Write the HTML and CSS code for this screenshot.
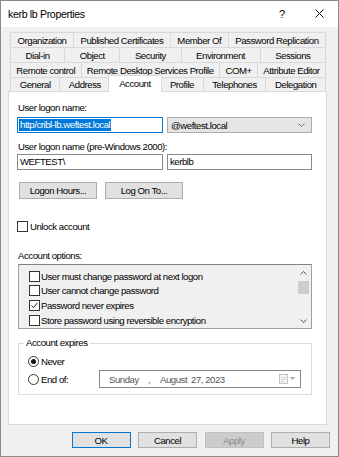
FILE: index.html
```html
<!DOCTYPE html>
<html>
<head>
<meta charset="utf-8">
<link rel="stylesheet" href="styles.css">
</head>
<body>
<div class="window">
  <div class="titlebar">
    <span class="title">kerb lb Properties</span>
    <span class="help">?</span>
    <span class="close"><svg width="9" height="9" viewBox="0 0 9 9"><path d="M0.5 0.5L8.5 8.5M8.5 0.5L0.5 8.5" stroke="#111" stroke-width="1" fill="none"/></svg></span>
  </div>
  <div class="main">
    <div class="tabs">
      <div class="tabrow h15">
        <div class="tab">Organization</div>
        <div class="tab">Published Certificates</div>
        <div class="tab">Member Of</div>
        <div class="tab last">Password Replication</div>
      </div>
      <div class="tabrow h15">
        <div class="tab">Dial-in</div>
        <div class="tab">Object</div>
        <div class="tab">Security</div>
        <div class="tab">Environment</div>
        <div class="tab last">Sessions</div>
      </div>
      <div class="tabrow h15">
        <div class="tab">Remote control</div>
        <div class="tab">Remote Desktop Services Profile</div>
        <div class="tab">COM+</div>
        <div class="tab last">Attribute Editor</div>
      </div>
      <div class="tabrow h14">
        <div class="tab">General</div>
        <div class="tab">Address</div>
        <div class="tab sel">Account</div>
        <div class="tab">Profile</div>
        <div class="tab">Telephones</div>
        <div class="tab last">Delegation</div>
      </div>
    </div>

    <div class="panel">
      <div class="label l1">User logon name:</div>
      <div class="fieldrow r1">
        <div class="input focus"><span class="selected">http/cribl-lb.weftest.local</span></div>
        <div class="combo">
          <span class="combo-text">@weftest.local</span>
          <svg class="chev" width="7" height="4" viewBox="0 0 7 4"><path d="M0.5 0.5L3.5 3.5L6.5 0.5" stroke="#707070" fill="none" stroke-width="1"/></svg>
        </div>
      </div>
      <div class="label l2">User logon name (pre-Windows 2000):</div>
      <div class="fieldrow r2">
        <div class="input">WEFTEST\</div>
        <div class="input grow">kerblb</div>
      </div>
      <div class="btnrow">
        <div class="btn wide">Logon Hours...</div>
        <div class="btn wide">Log On To...</div>
      </div>
      <div class="check unlock"><span class="box"></span><span>Unlock account</span></div>
      <div class="label l3">Account options:</div>
      <div class="listbox">
        <div class="items">
          <div class="item"><span class="box"></span><span>User must change password at next logon</span></div>
          <div class="item"><span class="box"></span><span>User cannot change password</span></div>
          <div class="item"><span class="box"><svg width="9" height="9" viewBox="0 0 9 9"><path d="M1.5 4.5L3.5 6.5L7.5 1.8" stroke="#222" stroke-width="1" fill="none"/></svg></span><span>Password never expires</span></div>
          <div class="item"><span class="box"></span><span>Store password using reversible encryption</span></div>
        </div>
        <div class="vscroll">
          <div class="arrow"><svg width="7" height="4" viewBox="0 0 7 4"><path d="M0.5 3.5L3.5 0.5L6.5 3.5" stroke="#555" fill="none" stroke-width="1"/></svg></div>
          <div class="thumb"></div>
          <div class="track"></div>
          <div class="arrow"><svg width="7" height="4" viewBox="0 0 7 4"><path d="M0.5 0.5L3.5 3.5L6.5 0.5" stroke="#555" fill="none" stroke-width="1"/></svg></div>
        </div>
      </div>
      <div class="group">
        <div class="legend">Account expires</div>
        <div class="radiorow first"><span class="radio on"></span><span>Never</span></div>
        <div class="endrow">
          <span class="radio"></span><span class="endtext">End of:</span>
          <div class="datepick">
            <span class="d-day">Sunday</span>
            <span class="d-comma">,</span>
            <span class="d-month">August</span>
            <span class="d-rest">27, 2023</span>
            <span class="d-icons">
              <svg width="17" height="10" viewBox="0 0 17 10"><rect x="0.5" y="0.5" width="8" height="9" fill="#f4f4f4" stroke="#c4c4c4"/><path d="M2 3.5H7M2 5.5H7M2 7.5H5" stroke="#d6d6d6"/><path d="M11 3L16 3L13.5 6Z" fill="#a8a8a8"/></svg>
            </span>
          </div>
        </div>
      </div>
    </div>

    <div class="dlgbtns">
      <div class="btn dlg default">OK</div>
      <div class="btn dlg">Cancel</div>
      <div class="btn dlg disabled">Apply</div>
      <div class="btn dlg">Help</div>
    </div>
  </div>
</div>
</body>
</html>
```
FILE: styles.css
```css
* { box-sizing: border-box; }
html, body { margin: 0; padding: 0; }
body {
  width: 339px;
  height: 457px;
  overflow: hidden;
  font-family: "Liberation Sans", Arial, sans-serif;
  font-size: 9.6px;
  letter-spacing: -0.45px;
  color: #000;
  background: #f0f0f0;
}
.window {
  width: 339px;
  height: 457px;
  border: 1px solid #8a8a8a;
  background: #f0f0f0;
  display: flex;
  flex-direction: column;
}
.titlebar {
  height: 26px;
  background: #fff;
  display: flex;
  align-items: center;
  padding-left: 7px;
  padding-right: 14px;
  flex: none;
}
.title {
  flex: 1;
  font-size: 10.6px;
  letter-spacing: -0.35px;
  color: #000;
}
.help {
  width: 10px;
  text-align: center;
  margin-right: 28px;
  font-size: 11px;
  letter-spacing: 0;
}
.close { display: flex; width: 9px; height: 9px; margin-top: -1px; }

.main {
  flex: 1;
  padding: 5px 11px 0 7px;
  display: flex;
  flex-direction: column;
}
.tabs { margin: 0 1px 0 2px; }
.tabrow { display: flex; align-items: flex-start; }
.tabrow.h15 { height: 15px; }
.tabrow.h14 { height: 14px; }
.tab {
  flex: 1 1 auto;
  height: 100%;
  border: 1px solid #d9d9d9;
  border-bottom: 0;
  border-right: 0;
  background: #f0f0f0;
  display: flex;
  align-items: center;
  justify-content: center;
  white-space: nowrap;
  padding: 0;
}
.tabrow.h15 .tab { height: 15px; }
.tabrow.h14 .tab { height: 14px; }
.tab.last { border-right: 1px solid #d9d9d9; }
.tabrow .tab.sel {
  position: relative;
  z-index: 2;
  height: 17px;
  margin-top: -2px;
  margin-left: -2px;
  margin-right: -2px;
  padding: 0 2px 1px 2px;
  background: #fff;
  border-right: 1px solid #d9d9d9;
}

.panel {
  height: 334px;
  background: #fff;
  border: 1px solid #d9d9d9;
  padding: 0 14px 0 8px;
  flex: none;
}
.label { height: 12px; line-height: 12px; padding-left: 1px; white-space: nowrap; }
.l1 { margin-top: 10px; }
.l2 { margin-top: 8px; }
.l3 { margin-top: 18px; }
.fieldrow { display: flex; gap: 4px; height: 16px; }
.r1 { margin-top: 3px; }
.r2 { margin-top: 1px; }
.input {
  flex: none;
  width: 146px;
  height: 16px;
  border: 1px solid #8a8a8a;
  background: #fff;
  line-height: 14px;
  padding-left: 2px;
  white-space: nowrap;
  overflow: hidden;
}
.input.grow { flex: 1; width: auto; }
.input.focus { border-color: #0078d7; padding-left: 1px; }
.selected {
  display: inline-block;
  background: #0078d7;
  color: #fff;
  line-height: 12px;
  margin-top: 1px;
  padding: 0 1px 0 1px;
}
.combo {
  flex: 1;
  height: 16px;
  border: 1px solid #adadad;
  background: #e5e5e5;
  display: flex;
  align-items: center;
  padding-left: 3px;
  padding-right: 6px;
}
.combo-text { flex: 1; }
.chev { display: block; }

.btnrow { display: flex; gap: 8px; margin-top: 12px; margin-left: 2px; }
.btn {
  height: 17px;
  border: 1px solid #adadad;
  background: #e1e1e1;
  display: flex;
  align-items: center;
  justify-content: center;
  white-space: nowrap;
  flex: none;
}
.btn.wide { width: 78px; }

.check { display: flex; align-items: center; height: 12px; }
.unlock { margin-top: 21px; }
.box {
  width: 11px;
  height: 11px;
  border: 1px solid #333;
  background: #fff;
  margin-right: 2px;
  display: flex;
  align-items: center;
  justify-content: center;
  flex: none;
}

.listbox {
  margin-top: 2px;
  margin-left: 1px;
  width: 294px;
  height: 65px;
  border: 1px solid #a0a0a0;
  border-top-color: #828282;
  background: #f0f0f0;
  display: flex;
}
.items { flex: 1; padding: 4px 0 0 10px; }
.item { height: 14.6px; display: flex; align-items: center; white-space: nowrap; }
.item .box { width: 11px; height: 11px; margin-right: 1px; }
.vscroll {
  width: 14px;
  flex: none;
  display: flex;
  flex-direction: column;
  padding-right: 1px;
}
.arrow {
  height: 15px;
  display: flex;
  align-items: center;
  justify-content: center;
  flex: none;
}
.thumb { height: 13px; margin: 1px 1px 0 1px; background: #cdcdcd; flex: none; }
.track { flex: 1; }

.group {
  margin-top: 14px;
  margin-left: 1px;
  width: 294px;
  height: 52px;
  border: 1px solid #dcdcdc;
  padding: 0 10px 0 9px;
}
.legend {
  width: max-content;
  height: 12px;
  line-height: 12px;
  margin: -7px 0 0 -4px;
  padding: 0 2px;
  background: #fff;
}
.radiorow { display: flex; align-items: center; }
.radiorow.first { margin-top: 6px; height: 12px; }
.endrow {
  display: flex;
  align-items: center;
  margin-top: 3px;
  height: 18px;
}
.endtext { flex: none; }
.radio {
  width: 11px;
  height: 11px;
  border: 1px solid #333;
  border-radius: 50%;
  background: #fff;
  margin-right: 2px;
  display: flex;
  align-items: center;
  justify-content: center;
  flex: none;
}
.radio.on::after {
  content: "";
  width: 5px;
  height: 5px;
  border-radius: 50%;
  background: #111;
}
.datepick {
  flex: none;
  margin-left: auto;
  width: 202px;
  max-width: 202px;
  height: 18px;
  border: 1px solid #8a8a8a;
  background: #fff;
  display: flex;
  align-items: center;
  color: #555;
  padding-left: 9px;
  white-space: nowrap;
}
.d-day { width: 39px; flex: none; }
.d-comma { width: 12px; flex: none; }
.d-month { width: 31px; flex: none; }
.d-rest { flex: 1; }
.d-icons { display: flex; margin-right: 4px; }

.dlgbtns {
  display: flex;
  justify-content: flex-end;
  gap: 7.5px;
  margin-top: 7px;
  margin-right: -3px;
}
.btn.dlg { width: 59px; height: 16px; }
.btn.default { border-color: #0078d7; }
.btn.disabled { background: #cccccc; border-color: #bfbfbf; color: #8a8a8a; }
```
